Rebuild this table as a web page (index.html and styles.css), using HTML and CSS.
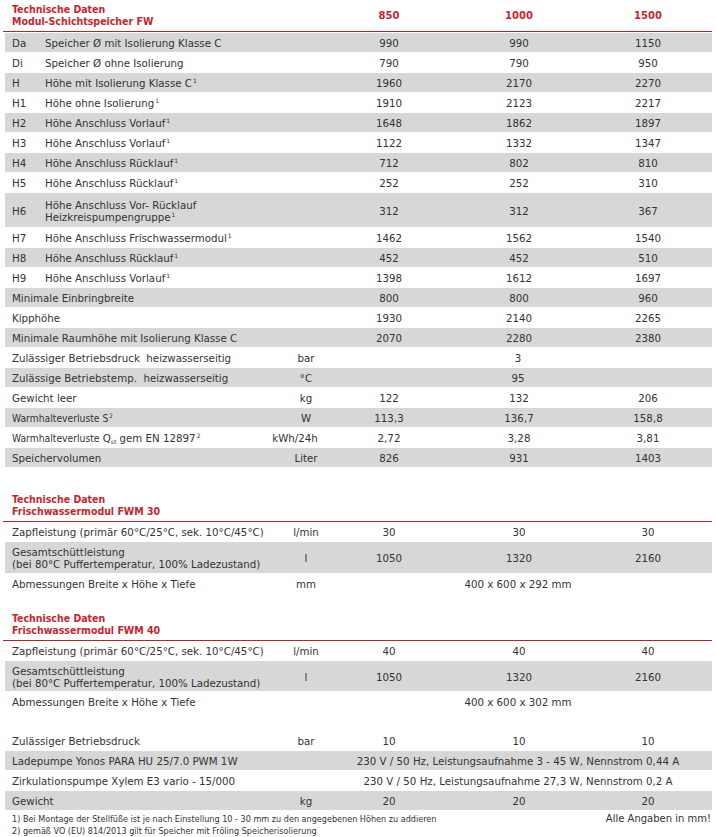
FILE: index.html
```html
<!DOCTYPE html>
<html lang="de">
<head>
<meta charset="utf-8">
<title>Technische Daten Modul-Schichtspeicher FW</title>
<link rel="stylesheet" href="styles.css">
</head>
<body>
<div class="sheet">

  <section class="block first">
    <div class="head">
      <div class="title">Technische Daten<br>Modul-Schichtspeicher FW</div>
      <div class="hnum">850</div>
      <div class="hnum">1000</div>
      <div class="hnum">1500</div>
    </div>
    <div class="row g"><span class="code">Da</span><span class="lbl">Speicher Ø mit Isolierung Klasse C</span><span class="unit"></span><span class="v">990</span><span class="v">990</span><span class="v">1150</span></div>
    <div class="row"><span class="code">Di</span><span class="lbl">Speicher Ø ohne Isolierung</span><span class="unit"></span><span class="v">790</span><span class="v">790</span><span class="v">950</span></div>
    <div class="row g"><span class="code">H</span><span class="lbl">Höhe mit Isolierung Klasse C<span class="sup">1</span></span><span class="unit"></span><span class="v">1960</span><span class="v">2170</span><span class="v">2270</span></div>
    <div class="row"><span class="code">H1</span><span class="lbl">Höhe ohne Isolierung<span class="sup">1</span></span><span class="unit"></span><span class="v">1910</span><span class="v">2123</span><span class="v">2217</span></div>
    <div class="row g"><span class="code">H2</span><span class="lbl">Höhe Anschluss Vorlauf<span class="sup">1</span></span><span class="unit"></span><span class="v">1648</span><span class="v">1862</span><span class="v">1897</span></div>
    <div class="row"><span class="code">H3</span><span class="lbl">Höhe Anschluss Vorlauf<span class="sup">1</span></span><span class="unit"></span><span class="v">1122</span><span class="v">1332</span><span class="v">1347</span></div>
    <div class="row g"><span class="code">H4</span><span class="lbl">Höhe Anschluss Rücklauf<span class="sup">1</span></span><span class="unit"></span><span class="v">712</span><span class="v">802</span><span class="v">810</span></div>
    <div class="row"><span class="code">H5</span><span class="lbl">Höhe Anschluss Rücklauf<span class="sup">1</span></span><span class="unit"></span><span class="v">252</span><span class="v">252</span><span class="v">310</span></div>
    <div class="row g tall"><span class="code top">H6</span><span class="lbl">Höhe Anschluss Vor- Rücklauf<br>Heizkreispumpengruppe<span class="sup">1</span></span><span class="unit"></span><span class="v">312</span><span class="v">312</span><span class="v">367</span></div>
    <div class="row"><span class="code">H7</span><span class="lbl">Höhe Anschluss Frischwassermodul<span class="sup">1</span></span><span class="unit"></span><span class="v">1462</span><span class="v">1562</span><span class="v">1540</span></div>
    <div class="row g"><span class="code">H8</span><span class="lbl">Höhe Anschluss Rücklauf<span class="sup">1</span></span><span class="unit"></span><span class="v">452</span><span class="v">452</span><span class="v">510</span></div>
    <div class="row"><span class="code">H9</span><span class="lbl">Höhe Anschluss Vorlauf<span class="sup">1</span></span><span class="unit"></span><span class="v">1398</span><span class="v">1612</span><span class="v">1697</span></div>
    <div class="row g"><span class="lbl wide">Minimale Einbringbreite</span><span class="unit"></span><span class="v">800</span><span class="v">800</span><span class="v">960</span></div>
    <div class="row"><span class="lbl wide">Kipphöhe</span><span class="unit"></span><span class="v">1930</span><span class="v">2140</span><span class="v">2265</span></div>
    <div class="row g"><span class="lbl wide">Minimale Raumhöhe mit Isolierung Klasse C</span><span class="unit"></span><span class="v">2070</span><span class="v">2280</span><span class="v">2380</span></div>
    <div class="row"><span class="lbl wide">Zulässiger Betriebsdruck&nbsp; heizwasserseitig</span><span class="unit">bar</span><span class="v span">3</span></div>
    <div class="row g"><span class="lbl wide">Zulässige Betriebstemp.&nbsp; heizwasserseitig</span><span class="unit">°C</span><span class="v span">95</span></div>
    <div class="row"><span class="lbl wide">Gewicht leer</span><span class="unit">kg</span><span class="v">122</span><span class="v">132</span><span class="v">206</span></div>
    <div class="row g"><span class="lbl wide"><span class="narrow">Warmhalteverluste S<span class="sup">2</span></span></span><span class="unit">W</span><span class="v">113,3</span><span class="v">136,7</span><span class="v">158,8</span></div>
    <div class="row"><span class="lbl wide"><span class="narrow">Warmhalteverluste</span> Q<span class="sub">st</span> gem EN 12897<span class="sup">2</span></span><span class="unit shift">kWh/24h</span><span class="v">2,72</span><span class="v">3,28</span><span class="v">3,81</span></div>
    <div class="row g"><span class="lbl wide">Speichervolumen</span><span class="unit">Liter</span><span class="v">826</span><span class="v">931</span><span class="v">1403</span></div>
  </section>

  <section class="block fwm30">
    <div class="head">
      <div class="title">Technische Daten<br>Frischwassermodul FWM 30</div>
    </div>
    <div class="row"><span class="lbl wide">Zapfleistung (primär 60°C/25°C, sek. 10°C/45°C)</span><span class="unit">l/min</span><span class="v">30</span><span class="v">30</span><span class="v">30</span></div>
    <div class="row g mid"><span class="lbl wide">Gesamtschüttleistung<br>(bei 80°C Puffertemperatur, 100% Ladezustand)</span><span class="unit">l</span><span class="v">1050</span><span class="v">1320</span><span class="v">2160</span></div>
    <div class="row"><span class="lbl wide">Abmessungen Breite x Höhe x Tiefe</span><span class="unit">mm</span><span class="v span">400 x 600 x 292 mm</span></div>
  </section>

  <section class="block fwm40">
    <div class="head">
      <div class="title">Technische Daten<br>Frischwassermodul FWM 40</div>
    </div>
    <div class="row"><span class="lbl wide">Zapfleistung (primär 60°C/25°C, sek. 10°C/45°C)</span><span class="unit">l/min</span><span class="v">40</span><span class="v">40</span><span class="v">40</span></div>
    <div class="row g mid2"><span class="lbl wide">Gesamtschüttleistung<br>(bei 80°C Puffertemperatur, 100% Ladezustand)</span><span class="unit">l</span><span class="v">1050</span><span class="v">1320</span><span class="v">2160</span></div>
    <div class="row"><span class="lbl wide">Abmessungen Breite x Höhe x Tiefe</span><span class="unit"></span><span class="v span">400 x 600 x 302 mm</span></div>
  </section>

  <section class="block general">
    <div class="row"><span class="lbl wide">Zulässiger Betriebsdruck</span><span class="unit">bar</span><span class="v">10</span><span class="v">10</span><span class="v">10</span></div>
    <div class="row g"><span class="lbl wide">Ladepumpe Yonos PARA HU 25/7.0 PWM 1W</span><span class="unit"></span><span class="v span">230 V / 50 Hz, Leistungsaufnahme 3 - 45 W, Nennstrom 0,44 A</span></div>
    <div class="row"><span class="lbl wide">Zirkulationspumpe Xylem E3 vario - 15/000</span><span class="unit"></span><span class="v span">230 V / 50 Hz, Leistungsaufnahme 27,3 W, Nennstrom 0,2 A</span></div>
    <div class="row g"><span class="lbl wide">Gewicht</span><span class="unit">kg</span><span class="v">20</span><span class="v">20</span><span class="v">20</span></div>
  </section>

  <footer class="notes">
    <div class="note-line">
      <span class="note">1) Bei Montage der Stellfüße ist je nach Einstellung 10 - 30 mm zu den angegebenen Höhen zu addieren</span>
      <span class="all">Alle Angaben in mm!</span>
    </div>
    <div class="note-line">
      <span class="note">2) gemäß VO (EU) 814/2013 gilt für Speicher mit Fröling Speicherisolierung</span>
    </div>
  </footer>
</div>
</body>
</html>
```
FILE: styles.css
```css
html, body {
  margin: 0;
  padding: 0;
  background: #ffffff;
}

body {
  font-family: "DejaVu Sans", Verdana, sans-serif;
  font-size: 10.25px;
  color: #333333;
}

.sheet {
  width: 707px;
  margin-left: 5px;
}

.block {
  display: flex;
  flex-direction: column;
  gap: 1px;
}

.head,
.row {
  display: grid;
  grid-template-columns: 35px 248px 36px 130px 130px 128px;
}

.head {
  margin-left: -2px;
  padding: 3px 0 4px 2px;
  border-bottom: 1px solid #b0262d;
}

.fwm30 .head,
.fwm40 .head {
  margin-bottom: -1px;
}

.title {
  grid-column: 1 / 4;
  padding-left: 7px;
  font-family: "DejaVu Sans Condensed", "DejaVu Sans", sans-serif;
  font-weight: bold;
  font-size: 10.5px;
  line-height: 12px;
  color: #c4262e;
}

.hnum {
  align-self: center;
  text-align: center;
  font-weight: bold;
  font-size: 10px;
  color: #c4262e;
}

.row {
  box-sizing: border-box;
  height: 19px;
  padding-top: 1px;
  align-items: center;
  line-height: 12px;
}

.row.g {
  background: #d7d7d7;
}

.row.tall {
  height: 34px;
}

.row.mid {
  height: 31px;
}

.row.mid2 {
  height: 30px;
}

.code {
  padding-left: 7px;
}

.lbl {
  padding-left: 5px;
  white-space: nowrap;
}

.lbl.wide {
  grid-column: 1 / 3;
  padding-left: 7px;
}

.unit {
  display: flex;
  justify-content: center;
  white-space: nowrap;
}

.unit.shift {
  margin-left: -22px;
}

.v {
  display: flex;
  justify-content: center;
  white-space: nowrap;
}

.v.span {
  grid-column: 4 / 7;
}

.sup {
  font-size: 6px;
  line-height: 0;
  vertical-align: 4px;
  margin-left: 1px;
}

.sub {
  font-size: 6px;
  line-height: 0;
  vertical-align: -2px;
}

.narrow {
  font-family: "DejaVu Sans Condensed", "DejaVu Sans", sans-serif;
}

.fwm30 {
  margin-top: 23px;
}

.fwm40 {
  margin-top: 16px;
}

.general {
  margin-top: 20px;
}

.notes {
  margin-top: 3px;
}

.note-line {
  display: flex;
  justify-content: space-between;
  align-items: baseline;
  height: 12px;
  line-height: 12px;
}

.note {
  padding-left: 7px;
  font-family: "DejaVu Sans Condensed", "DejaVu Sans", sans-serif;
  font-size: 9px;
  color: #333333;
}

.all {
  padding-right: 1px;
  font-size: 10px;
  color: #333333;
}
```
